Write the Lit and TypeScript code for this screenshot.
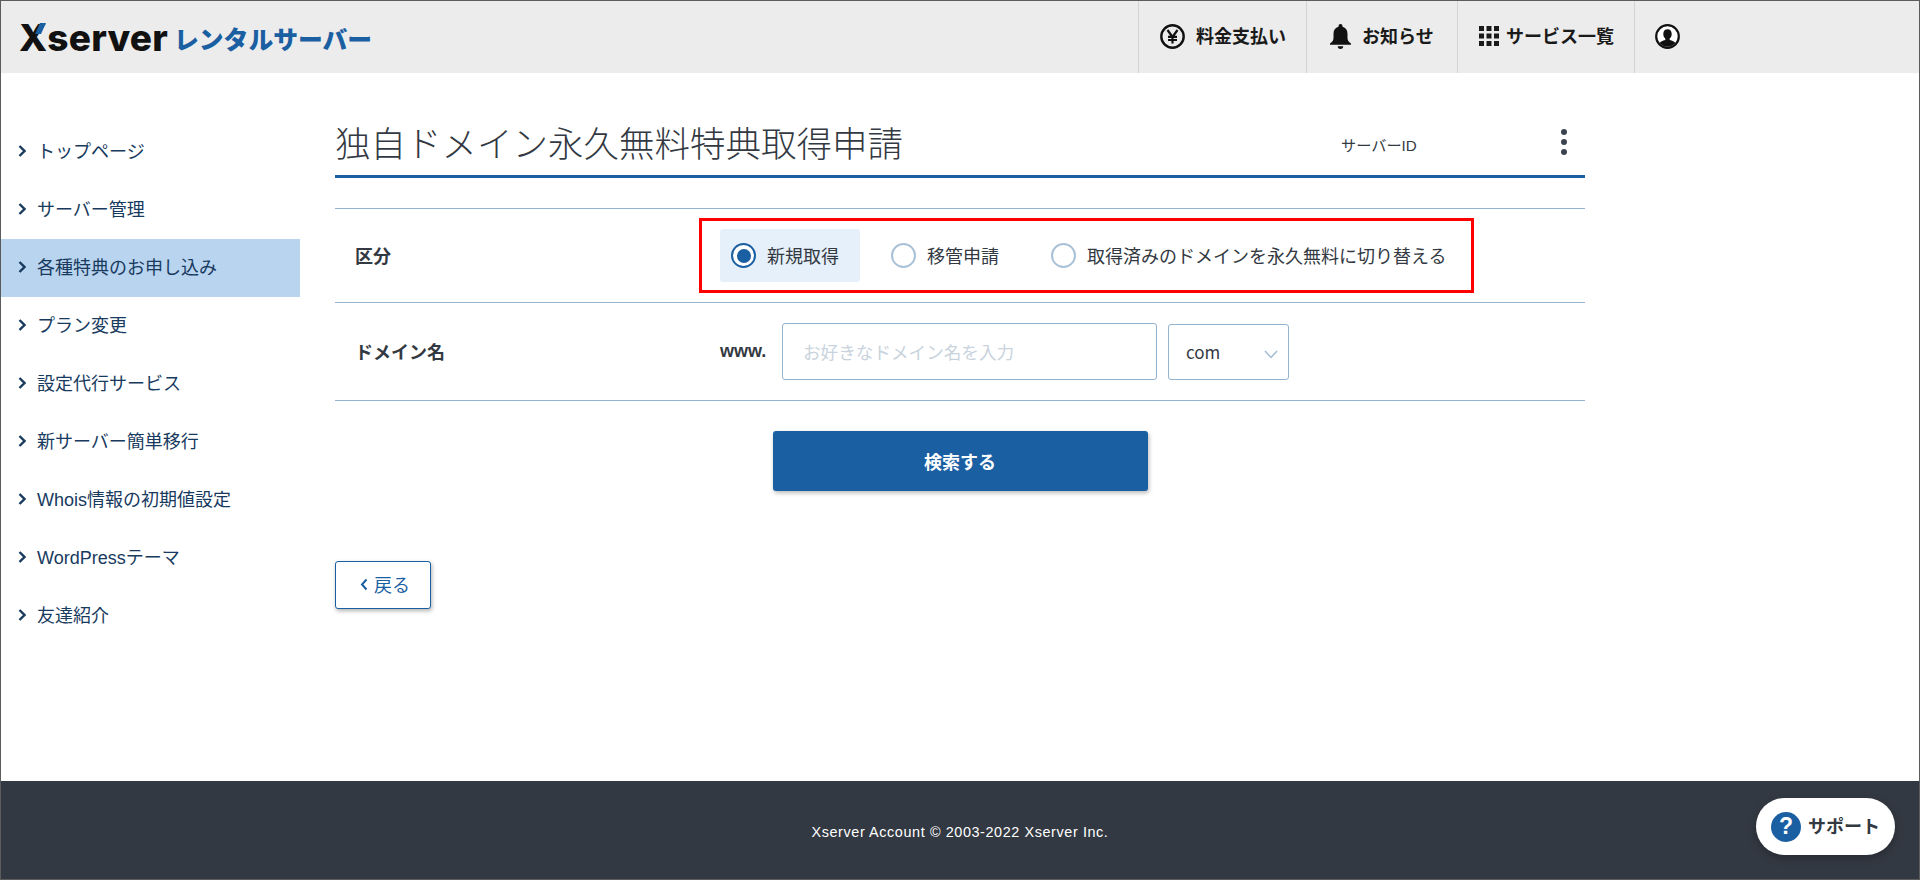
import { LitElement, html, css, svg } from "lit";
import { customElement } from "lit/decorators.js";

const NAV = ["トップページ", "サーバー管理", "各種特典のお申し込み", "プラン変更", "設定代行サービス", "新サーバー簡単移行", "Whois情報の初期値設定", "WordPressテーマ", "友達紹介"];
const ACTIVE = 2;
const RADIOS = ["新規取得", "移管申請", "取得済みのドメインを永久無料に切り替える"];

@customElement("app-root")
export class AppRoot extends LitElement {
  static styles = css`
    :host {
      display: flex;
      flex-direction: column;
      box-sizing: border-box;
      width: 1920px;
      height: 880px;
      border: 1px solid #5c5c5c;
      background: #fff;
      color: #333942;
      font-family: "Liberation Sans", "Noto Sans CJK JP", sans-serif;
      font-size: 18px;
      overflow: hidden;
      position: relative;
    }
    * { box-sizing: border-box; }
    .top {
      display: flex;
      align-items: stretch;
      justify-content: space-between;
      height: 72px;
      background: #ececec;
      flex: none;
    }
    .logo { display: flex; align-items: center; padding-left: 18px; gap: 6px; }
    .logo-x {
      position: relative;
      font-family: Inter, "Liberation Sans", sans-serif;
      font-weight: 800;
      font-size: 37px;
      line-height: 1;
      color: #111;
      letter-spacing: 0.2px;
    }
    .slash {
      position: absolute;
      left: 16px;
      top: 4px;
      width: 11px;
      height: 11px;
    }
    .logo-jp {
      font-family: "Noto Sans CJK JP", sans-serif;
      font-weight: 900;
      font-size: 24.8px;
      line-height: 1;
      color: #1b5fa3;
      margin-top: 3px;
    }
    .links { display: flex; }
    .link {
      display: flex;
      align-items: center;
      border-left: 1px solid #d4d4d4;
      padding-bottom: 2px;
      font-family: "Noto Sans CJK JP", sans-serif;
      font-weight: 700;
      color: #1a1a1a;
      font-size: 18px;
      line-height: 1;
    }
    .link span { padding-bottom: 2px; }
    .l1 { width: 168px; padding-left: 21px; gap: 11px; }
    .l2 { width: 151px; padding-left: 23px; gap: 11px; }
    .l3 { width: 177px; padding-left: 21px; gap: 7px; }
    .l4 { width: 285px; padding-left: 20px; }
    .body { flex: 1; display: flex; min-height: 0; }
    .side { width: 299px; flex: none; padding-top: 50px; }
    .side-item {
      display: flex;
      align-items: center;
      height: 58px;
      padding: 0 0 1px 17px;
      gap: 11px;
      color: #173a5e;
      line-height: 1;
    }
    .side-item.on { background: #b9d4ef; }
    .chev { flex: none; width: 8px; height: 12px; margin-top: -1px; }
    .main { width: 1250px; margin-left: 35px; padding-top: 46px; }
    .head {
      display: flex;
      align-items: center;
      height: 59px;
      padding-bottom: 11px;
      border-bottom: 3px solid #1b5fa3;
    }
    h1 {
      margin: 0;
      font-family: "Noto Sans CJK JP", sans-serif;
      font-weight: 300;
      font-size: 35.5px;
      line-height: 1;
      flex: 1;
      color: #333942;
    }
    .sid { font-size: 15.2px; color: #333942; width: 222px; padding-left: 2px; margin-top: 4px; }
    .kebab { width: 6px; display: flex; flex-direction: column; gap: 3.6px; margin-right: 18px; margin-top: 1px; }
    .kebab i { display: block; width: 6px; height: 6px; border-radius: 50%; background: #3c4350; }
    .tbl { margin-top: 30px; border-top: 1px solid #93b3d0; }
    .row {
      display: grid;
      grid-template-columns: 364px 1fr;
      align-items: center;
      border-bottom: 1px solid #93b3d0;
    }
    .row.r1 { height: 94px; }
    .row.r2 { height: 98px; }
    .lab { font-family: "Noto Sans CJK JP", sans-serif; font-weight: 700; padding: 0 0 2px 20px; line-height: 1; }
    .box {
      display: flex;
      align-items: center;
      gap: 20px;
      width: 775px;
      height: 75px;
      border: 3px solid #f00;
      padding-left: 18px;
    }
    .radio {
      display: flex;
      align-items: center;
      gap: 11px;
      height: 53px;
      padding: 0 21px 0 11px;
      border-radius: 3px;
      line-height: 1;
      white-space: nowrap;
      font-family: "Noto Sans CJK JP", sans-serif;
    }
    .radio span:last-child { padding-bottom: 2px; }
    .radio.on { background: #e6f0fa; }
    .dot {
      width: 25px;
      height: 25px;
      border-radius: 50%;
      border: 2px solid #a9c1d8;
      background: #fff;
      display: flex;
      align-items: center;
      justify-content: center;
      flex: none;
    }
    .on .dot { border-color: #1b5fa3; }
    .on .dot::after { content: ""; width: 14px; height: 14px; border-radius: 50%; background: #1b5fa3; }
    .dom { display: flex; align-items: center; padding-left: 21px; }
    .www { font-weight: 700; width: 62px; line-height: 1; padding-bottom: 2px; }
    .inp {
      width: 375px;
      height: 57px;
      border: 1px solid #93b3d0;
      border-radius: 3px;
      padding: 0 20px 1px;
      font: inherit;
      font-size: 17.6px;
      font-family: "Noto Sans CJK JP", sans-serif;
      outline: none;
      color: #333942;
    }
    .inp::placeholder { color: #c8d3dd; opacity: 1; }
    .sel {
      position: relative;
      width: 121px;
      height: 56px;
      margin-left: 11px;
      border: 1px solid #93b3d0;
      border-radius: 3px;
      display: flex;
      align-items: center;
      padding-left: 17px;
      font-family: "Noto Sans CJK JP", sans-serif;
      font-size: 17px;
    }
    .caret { position: absolute; right: 10px; top: 25px; width: 14px; height: 9px; }
    .go {
      display: block;
      width: 375px;
      height: 60px;
      margin: 30px auto 0;
      padding: 0 0 1px;
      border: 0;
      border-radius: 3px;
      background: #1b5fa3;
      color: #fff;
      font: 700 18px "Noto Sans CJK JP", sans-serif;
      box-shadow: 1px 2px 4px rgba(0, 0, 0, 0.28);
    }
    .back {
      display: flex;
      align-items: center;
      justify-content: center;
      gap: 6px;
      width: 96px;
      height: 48px;
      margin-top: 70px;
      padding: 0 0 2px 4px;
      border: 1px solid #1b5fa3;
      border-radius: 3px;
      background: #fff;
      color: #1b5fa3;
      font: 400 18px "Noto Sans CJK JP", sans-serif;
      box-shadow: 1px 2px 4px rgba(0, 0, 0, 0.3);
    }
    .back svg { width: 8px; height: 13px; }
    .foot {
      flex: none;
      height: 98px;
      padding-top: 3px;
      background: #333942;
      color: #fff;
      font-size: 14.4px;
      letter-spacing: 0.6px;
      display: flex;
      align-items: center;
      justify-content: center;
    }
    .support {
      position: absolute;
      left: 1755px;
      top: 797px;
      width: 139px;
      height: 57px;
      display: flex;
      align-items: center;
      gap: 7px;
      padding-left: 15px;
      border-radius: 29px;
      background: #fff;
      box-shadow: 0 3px 8px rgba(0, 0, 0, 0.25);
      color: #333942;
      font: 700 18px "Noto Sans CJK JP", sans-serif;
    }
    .support span:last-child { padding-bottom: 3px; }
    .q {
      width: 30px;
      height: 30px;
      border-radius: 50%;
      background: #1b5fa3;
      color: #fff;
      display: flex;
      align-items: center;
      justify-content: center;
      font: 700 23px "Liberation Sans", sans-serif;
    }
  `;

  private yen() {
    return html`<svg width="25" height="25" viewBox="0 0 25 25" fill="none" stroke="#111">
      <circle cx="12.5" cy="12.5" r="11.2" stroke-width="2.4"></circle>
      <path d="M7.5 6l5 7 5-7M12.5 13v6.5M8 12.8h9M8 16h9" stroke-width="2.2"></path>
    </svg>`;
  }
  private bell() {
    return html`<svg width="21" height="25" viewBox="0 0 21 25" fill="#111">
      <path d="M10.5 0a2 2 0 0 1 2 2v.7c3.3.9 5 3.5 5 7v4.2c0 2.2 1 3.6 3.5 5.6v1.2H0v-1.2c2.500-2 3.500-3.400 3.500-5.600V9.700c0-3.500 1.700-6.100 5-7V2a2 2 0 0 1 2-2z"></path>
      <path d="M7.800 22.300h5.400a2.700 2.700 0 0 1-5.400 0z"></path>
    </svg>`;
  }
  private grid() {
    const cells = [0, 7.500, 15].flatMap((y) => [0, 7.500, 15].map((x) => svg`<rect x=${x} y=${y} width="5" height="5"></rect>`));
    return html`<svg width="20" height="20" viewBox="0 0 20 20" fill="#1a1a1a">${cells}</svg>`;
  }
  private user() {
    return html`<svg width="25" height="25" viewBox="0 0 25 25">
      <circle cx="12.5" cy="12.5" r="11.300" fill="#fff" stroke="#111" stroke-width="2.200"></circle>
      <path fill="#111" d="M12.500 5.200c2.700 0 4.200 2.100 4.200 4.700 0 1.900-.8 3.600-2 4.500v1.500c2.600.8 4.700 1.600 5.700 3a10.200 10.200 0 0 1-15.800 0c1-1.400 3.100-2.200 5.700-3v-1.500c-1.200-.9-2-2.600-2-4.500 0-2.600 1.500-4.700 4.200-4.700z"></path>
    </svg>`;
  }

  render() {
    return html`
      <header class="top">
        <div class="logo">
          <span class="logo-x">Xserver<svg class="slash" viewBox="0 0 11 11"><path fill="#1b5fa3" d="M5 0h6L6 11H0z"></path></svg></span>
          <span class="logo-jp">レンタルサーバー</span>
        </div>
        <nav class="links">
          <div class="link l1">${this.yen()}<span>料金支払い</span></div>
          <div class="link l2">${this.bell()}<span>お知らせ</span></div>
          <div class="link l3">${this.grid()}<span>サービス一覧</span></div>
          <div class="link l4">${this.user()}</div>
        </nav>
      </header>
      <div class="body">
        <aside class="side">
          ${NAV.map((t, i) => html`<div class="side-item ${i === ACTIVE ? "on" : ""}">
            <svg class="chev" viewBox="0 0 8 12" fill="none" stroke="#173a5e" stroke-width="2.400"><path d="M1.500 1l5 5-5 5"></path></svg>
            <span>${t}</span>
          </div>`)}
        </aside>
        <main class="main">
          <div class="head">
            <h1>独自ドメイン永久無料特典取得申請</h1>
            <span class="sid">サーバーID</span>
            <div class="kebab"><i></i><i></i><i></i></div>
          </div>
          <div class="tbl">
            <div class="row r1">
              <div class="lab">区分</div>
              <div class="box">
                ${RADIOS.map((t, i) => html`<label class="radio ${i === 0 ? "on" : ""}"><span class="dot"></span><span>${t}</span></label>`)}
              </div>
            </div>
            <div class="row r2">
              <div class="lab">ドメイン名</div>
              <div class="dom">
                <span class="www">www.</span>
                <input class="inp" placeholder="お好きなドメイン名を入力" />
                <div class="sel">com
                  <svg class="caret" viewBox="0 0 14 9" fill="none" stroke="#a3bbd2" stroke-width="1.500"><path d="M1 1l6 6.500L13 1"></path></svg>
                </div>
              </div>
            </div>
          </div>
          <button class="go">検索する</button>
          <button class="back"><svg viewBox="0 0 8 13" fill="none" stroke="#1b5fa3" stroke-width="2"><path d="M6.500 1.500L2 6.500l4.500 5"></path></svg>戻る</button>
        </main>
      </div>
      <footer class="foot">Xserver Account © 2003-2022 Xserver Inc.</footer>
      <div class="support"><span class="q">?</span><span>サポート</span></div>
    `;
  }
}
